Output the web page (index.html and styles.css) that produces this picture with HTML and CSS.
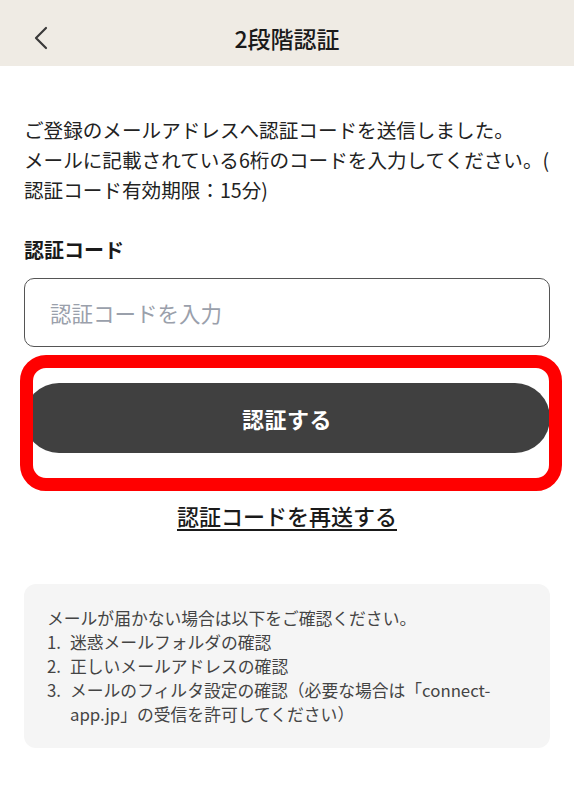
FILE: index.html
```html
<!DOCTYPE html>
<html lang="ja">
<head>
<meta charset="utf-8">
<title>2段階認証</title>
<link rel="stylesheet" href="styles.css">
</head>
<body>
<header class="app-header">
  <button class="back-btn" aria-label="戻る">
    <svg width="16" height="24" viewBox="0 0 16 24"><path d="M13 2 L3 12 L13 22" fill="none" stroke="#3a3a3a" stroke-width="2.2" stroke-linecap="round" stroke-linejoin="round"/></svg>
  </button>
  <h1 class="title">2段階認証</h1>
</header>
<main class="content">
  <p class="lead">ご登録のメールアドレスへ認証コードを送信しました。<br>メールに記載されている6桁のコードを入力してください。(<br>認証コード有効期限：15分)</p>
  <label class="field-label" for="code">認証コード</label>
  <input id="code" class="code-input" type="text" placeholder="認証コードを入力">
  <div class="verify-wrap">
    <button class="verify-btn">認証する</button>
    <div class="highlight"></div>
  </div>
  <a class="resend" href="#">認証コードを再送する</a>
  <div class="notice">
    <p class="notice-head">メールが届かない場合は以下をご確認ください。</p>
    <ol class="notice-list">
      <li><span class="num">1.</span><span>迷惑メールフォルダの確認</span></li>
      <li><span class="num">2.</span><span>正しいメールアドレスの確認</span></li>
      <li><span class="num">3.</span><span>メールのフィルタ設定の確認（必要な場合は「connect-<br>app.jp」の受信を許可してください）</span></li>
    </ol>
  </div>
</main>
</body>
</html>
```
FILE: styles.css
```css
* { box-sizing: border-box; }
html, body { margin: 0; padding: 0; background: #fff; }
body {
  font-family: "Noto Sans CJK JP", "Noto Sans", sans-serif;
  color: #222;
  width: 574px;
}
.app-header {
  height: 66px;
  background: #efebe4;
  display: flex;
  align-items: center;
  justify-content: center;
  position: relative;
  padding-top: 10px;
}
.back-btn {
  position: absolute;
  left: 33px;
  top: 26px;
  border: 0;
  background: none;
  padding: 0;
  width: 16px;
  height: 24px;
  display: block;
}
.back-btn svg { display: block; }
.title {
  margin: 0;
  font-size: 23px;
  font-weight: 500;
  color: #1a1a1a;
  line-height: 30px;
}
.content {
  padding: 49px 24px 0;
  display: flex;
  flex-direction: column;
}
.lead {
  margin: 0;
  font-size: 19.6px;
  line-height: 30px;
  color: #222;
}
.field-label {
  margin-top: 30px;
  font-size: 20px;
  font-weight: 700;
  line-height: 30px;
  color: #1a1a1a;
}
.code-input {
  margin-top: 13px;
  height: 69px;
  width: 100%;
  border: 1.5px solid #555;
  border-radius: 10px;
  padding: 0 0 0 25px;
  font-family: inherit;
  font-size: 21.5px;
  color: #222;
  outline: none;
  background: #fff;
}
.code-input::placeholder { color: #9aa0ab; }
.verify-wrap {
  position: relative;
  margin-top: 36px;
}
.verify-btn {
  display: block;
  width: 100%;
  height: 70px;
  border: 0;
  border-radius: 35px;
  background: #404040;
  color: #fff;
  font-family: inherit;
  font-size: 22px;
  font-weight: 700;
  letter-spacing: 0.5px;
}
.highlight {
  position: absolute;
  top: -28px;
  left: -4px;
  right: -12px;
  bottom: -38px;
  border: 13px solid #ff0000;
  border-radius: 26px;
  pointer-events: none;
}
.resend {
  align-self: center;
  margin-top: 47px;
  font-size: 22px;
  font-weight: 500;
  line-height: 30px;
  color: #1a1a1a;
  text-decoration: underline;
  text-underline-offset: 4px;
  text-decoration-thickness: 1.5px;
}
.notice {
  margin-top: 54px;
  background: #f5f5f5;
  border-radius: 12px;
  padding: 22px 23px;
  color: #444;
  font-size: 16.8px;
  line-height: 24px;
}
.notice-head { margin: 0; }
.notice-list {
  list-style: none;
  margin: 0;
  padding: 0;
}
.notice-list li {
  display: grid;
  grid-template-columns: 23px 1fr;
}
```
